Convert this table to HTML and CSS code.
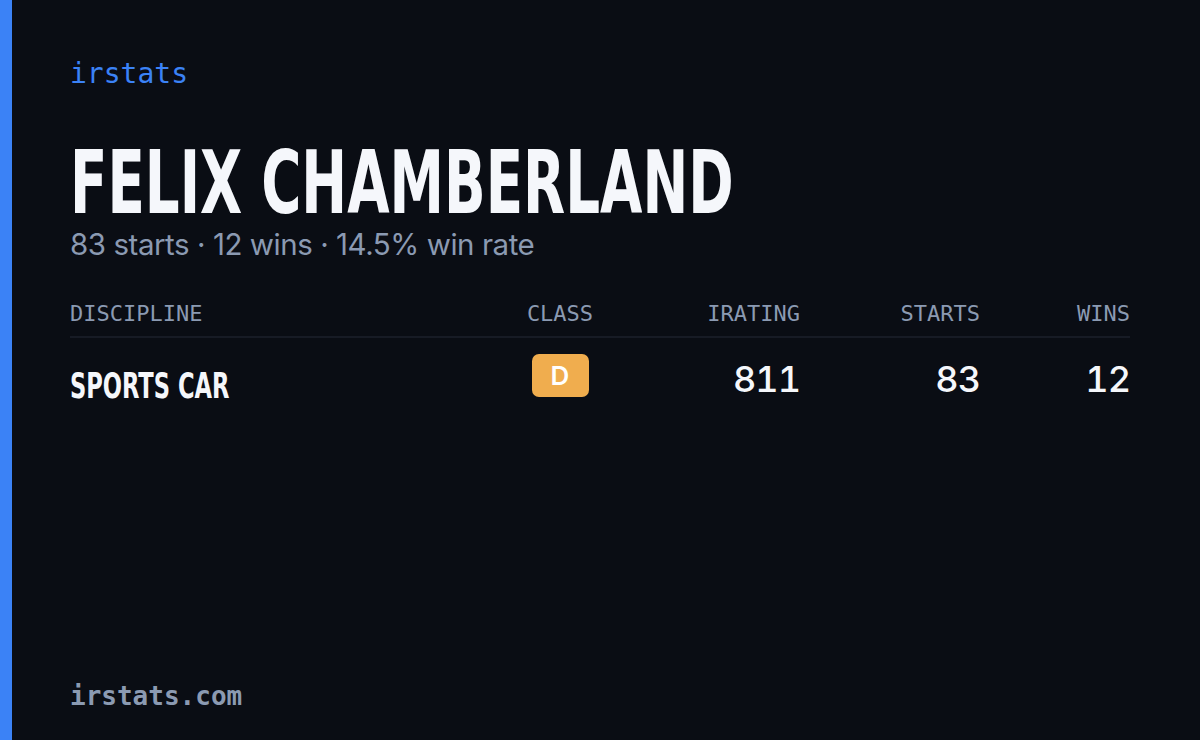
FILE: index.html
```html
<!DOCTYPE html>
<html>
<head>
<meta charset="utf-8">
<link rel="stylesheet" href="styles.css">
</head>
<body>
<div class="card">
  <div class="accent"></div>
  <div class="content">
    <div class="brand">irstats</div>
    <h1 class="name"><span class="narrow name-text">FELIX CHAMBERLAND</span></h1>
    <div class="summary">83 starts · 12 wins · 14.5% win rate</div>
    <div class="table">
      <div class="row head">
        <div class="c-disc">DISCIPLINE</div>
        <div class="c-class">CLASS</div>
        <div class="c-num">IRATING</div>
        <div class="c-num">STARTS</div>
        <div class="c-num">WINS</div>
      </div>
      <div class="row body">
        <div class="c-disc disc-name"><span class="narrow">SPORTS CAR</span></div>
        <div class="c-class"><span class="badge">D</span></div>
        <div class="c-num num">811</div>
        <div class="c-num num">83</div>
        <div class="c-num num">12</div>
      </div>
    </div>
    <div class="spacer"></div>
    <div class="footer">irstats.com</div>
  </div>
</div>
</body>
</html>
```
FILE: styles.css
```css
html, body {
  margin: 0;
  padding: 0;
  background: #0a0d14;
}
.card {
  width: 1200px;
  height: 740px;
  display: flex;
  background: #0a0d14;
  overflow: hidden;
}
.accent {
  width: 12px;
  background: #3b82f6;
  flex: none;
}
.content {
  flex: 1;
  display: flex;
  flex-direction: column;
  padding: 54px 70px 24px 58px;
}
.brand {
  font-family: "DejaVu Sans Mono", "Liberation Mono", monospace;
  font-size: 28px;
  line-height: 40px;
  color: #3b82f6;
}
.narrow {
  display: inline-block;
  transform: scaleX(0.704);
  transform-origin: 0 50%;
  white-space: nowrap;
}
.name {
  margin: 54px 0 0 0;
  font-family: "DejaVu Sans Condensed", "DejaVu Sans", sans-serif;
  font-weight: 700;
  font-size: 86.4px;
  line-height: 70px;
  color: #f5f7fb;
}
.summary {
  margin-top: 8px;
  font-family: "Inter", "Noto Sans", sans-serif;
  font-size: 29.5px;
  letter-spacing: -0.45px;
  line-height: 36px;
  color: #8b9ab2;
}
.table {
  margin-top: 37px;
  width: 1060px;
}
.row {
  display: grid;
  grid-template-columns: 1fr 130px 175px 180px 150px;
}
.row.head {
  align-items: center;
  font-family: "DejaVu Sans Mono", "Liberation Mono", monospace;
  font-size: 22px;
  color: #8b9ab2;
  line-height: 30px;
  padding-bottom: 7px;
  border-bottom: 2px solid #171b25;
}
.row.body {
  align-items: start;
  padding-top: 16px;
  line-height: 43px;
}
.c-class { text-align: center; }
.c-num { text-align: right; }
.disc-name {
  font-family: "DejaVu Sans Condensed", "DejaVu Sans", sans-serif;
  font-weight: 700;
  font-size: 35.7px;
  color: #f5f7fb;
  padding-top: 10px;
}
.badge {
  display: inline-block;
  width: 57px;
  height: 43px;
  line-height: 43px;
  border-radius: 7px;
  background: #f0ad4e;
  color: #ffffff;
  font-family: "Inter", sans-serif;
  font-weight: 600;
  font-size: 26px;
  text-align: center;
  vertical-align: top;
}
.num {
  font-family: "Inter", sans-serif;
  font-weight: 500;
  font-size: 36px;
  font-variant-numeric: tabular-nums;
  letter-spacing: -1px;
  color: #f5f7fb;
  padding-top: 4px;
}
.spacer { flex: 1; }
.footer {
  font-family: "DejaVu Sans Mono", "Liberation Mono", monospace;
  font-size: 26px;
  font-weight: 700;
  color: #8b9ab2;
  line-height: 40px;
}
```
